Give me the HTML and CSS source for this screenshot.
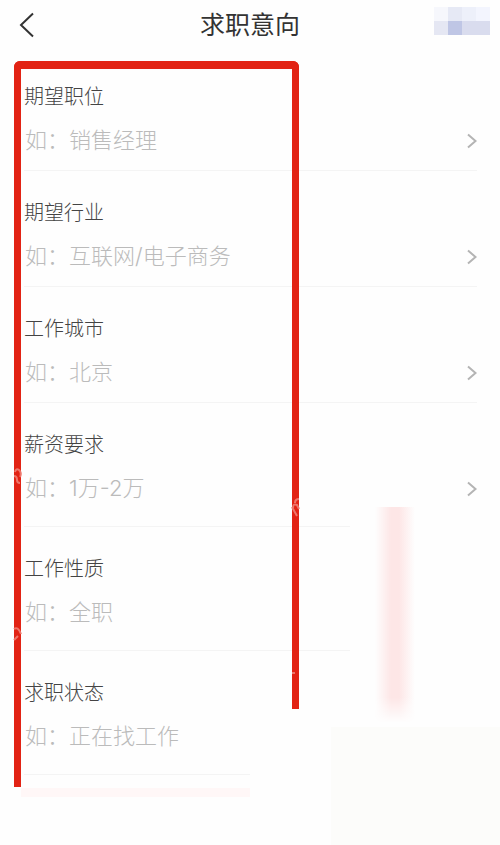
FILE: index.html
```html
<!DOCTYPE html>
<html lang="zh-CN">
<head>
    <meta charset="UTF-8">
    <meta name="viewport" content="width=device-width, initial-scale=1.0">
    <title>求职意向</title>
    <link rel="stylesheet" href="styles.css">
</head>
<body>
    <div class="page">
        <header class="header">
            <button class="back" type="button" aria-label="返回">
                <svg width="16" height="26" viewBox="0 0 16 26"><path d="M14 1.5 L2 13 L14 24.5" /></svg>
            </button>
            <h1>求职意向</h1>
            <div class="mosaic">
                <i class="c1"></i><i class="c2"></i><i class="c3"></i><i class="c4"></i>
                <i class="c5"></i><i class="c6"></i><i class="c7"></i><i class="c7"></i>
            </div>
        </header>

        <form class="form">
            <div class="row">
                <label for="position">期望职位</label>
                <div class="field">
                    <input id="position" type="text" placeholder="如：销售经理" readonly>
                    <button class="more" type="button" aria-label="选择期望职位"><svg width="10" height="16" viewBox="0 0 10 16"><path d="M1 1.5 L8.5 8 L1 14.5" /></svg></button>
                </div>
            </div>
            <div class="row">
                <label for="industry">期望行业</label>
                <div class="field">
                    <input id="industry" type="text" placeholder="如：互联网/电子商务" readonly>
                    <button class="more" type="button" aria-label="选择期望行业"><svg width="10" height="16" viewBox="0 0 10 16"><path d="M1 1.5 L8.5 8 L1 14.5" /></svg></button>
                </div>
            </div>
            <div class="row">
                <label for="city">工作城市</label>
                <div class="field">
                    <input id="city" type="text" placeholder="如：北京" readonly>
                    <button class="more" type="button" aria-label="选择工作城市"><svg width="10" height="16" viewBox="0 0 10 16"><path d="M1 1.5 L8.5 8 L1 14.5" /></svg></button>
                </div>
            </div>
            <div class="row tall">
                <label for="salary">薪资要求</label>
                <div class="field">
                    <input id="salary" type="text" placeholder="如：1万-2万" readonly>
                    <button class="more" type="button" aria-label="选择薪资要求"><svg width="10" height="16" viewBox="0 0 10 16"><path d="M1 1.5 L8.5 8 L1 14.5" /></svg></button>
                </div>
            </div>
            <div class="row tall">
                <label for="nature">工作性质</label>
                <div class="field">
                    <input id="nature" type="text" placeholder="如：全职" readonly>
                </div>
            </div>
            <div class="row tall">
                <label for="status">求职状态</label>
                <div class="field">
                    <input id="status" type="text" placeholder="如：正在找工作" readonly>
                </div>
            </div>
        </form>

        <!-- highlight frame and blurred patches drawn over the form -->
        <div class="frame"></div>
        <svg class="marks" width="500" height="800" viewBox="0 0 500 800">
            <path d="M15 472 q1 -4 4 -2 q3 3 1 7 M14 476 q3 0 3 4 q0 3 3 3" />
            <path d="M292 507 l5 9 M293 508 q0 -5 4 -3 l2 4 M295 503 q0 -4 4 -4" />
            <path d="M14 629 q4 -3 7 5 M14 640 l4 -4" />
            <path d="M292 673 h3" />
        </svg>
        <div class="patch patch-right"></div>
        <div class="patch patch-bottom"></div>
        <div class="stripe"></div>
        <div class="shade"></div>
        <div class="underline"></div>
    </div>
</body>
</html>
```
FILE: styles.css
```css
* {
    box-sizing: border-box;
}

body {
    margin: 0;
    background-color: #fefefe;
    font-family: Inter, "Noto Sans CJK SC", sans-serif;
}

.page {
    position: relative;
    min-height: 100vh;
    overflow: hidden;
}

.header {
    display: grid;
    grid-template-columns: 1fr auto 1fr;
    align-items: center;
    height: 55px;
    padding-bottom: 5px;
}

.header h1 {
    margin: 0;
    font-size: 25px;
    font-weight: 400;
    line-height: 36px;
    color: #333;
}

button {
    display: flex;
    padding: 0;
    border: none;
    background: none;
    cursor: pointer;
}

svg {
    fill: none;
}

.back {
    justify-self: start;
    margin-left: 19px;
}

.back svg {
    stroke: #333;
    stroke-width: 2;
}

.mosaic {
    justify-self: end;
    display: grid;
    grid-template-columns: repeat(4, 14px);
    grid-auto-rows: 14px;
    margin: 0 10px 8px 0;
}

.c1 { background-color: #f6f7fc; }
.c2 { background-color: #e6e9f5; }
.c3 { background-color: #edf0fa; }
.c4 { background-color: #f3f5fe; }
.c5 { background-color: #e5e7f3; }
.c6 { background-color: #bfc6e5; }
.c7 { background-color: #d9dcee; }

.form {
    padding: 0 23px 0 24px;
}

.row {
    padding: 28px 0 13px;
    border-bottom: 1px solid #f4f4f4;
}

.row.tall {
    padding-bottom: 21px;
}

.row label {
    display: block;
    margin-bottom: 14px;
    font-size: 20px;
    font-weight: 300;
    line-height: 28px;
    color: #444;
}

.field {
    display: flex;
    align-items: center;
    height: 32px;
}

.field input {
    flex: 1;
    min-width: 0;
    height: 32px;
    padding: 0 0 2px 1px;
    border: none;
    outline: none;
    background: none;
    font-family: inherit;
    font-size: 22px;
    font-weight: 300;
    color: #333;
}

.field input::placeholder {
    color: #bbb;
    opacity: 1;
}

.more svg {
    stroke: #b4b4b4;
    stroke-width: 2;
}

.frame {
    position: absolute;
    top: 61px;
    left: 14px;
    width: 285px;
    height: 726px;
    border: 8px solid #e22314;
    border-width: 8px 7px 0;
    border-radius: 6px 6px 0 0;
    pointer-events: none;
}

.marks {
    position: absolute;
    top: 0;
    left: 0;
    stroke: #ee766b;
    stroke-width: 2;
    pointer-events: none;
}

.patch {
    position: absolute;
    right: 0;
    background-color: #fefefe;
}

.patch-right {
    top: 507px;
    bottom: 0;
    left: 350px;
}

.patch-bottom {
    top: 709px;
    bottom: 0;
    left: 250px;
}

.stripe {
    position: absolute;
    top: 507px;
    left: 375px;
    width: 40px;
    height: 216px;
    background: linear-gradient(to right, #fefefe, #fde6e6 40%, #fde6e6 60%, #fefefe);
    mask-image: linear-gradient(#000 88%, transparent);
}

.shade {
    position: absolute;
    top: 727px;
    right: 0;
    bottom: 0;
    left: 331px;
    background-color: #fcfcfa;
}

.underline {
    position: absolute;
    top: 788px;
    left: 21px;
    width: 229px;
    height: 9px;
    background-color: #fff7f7;
}
```
